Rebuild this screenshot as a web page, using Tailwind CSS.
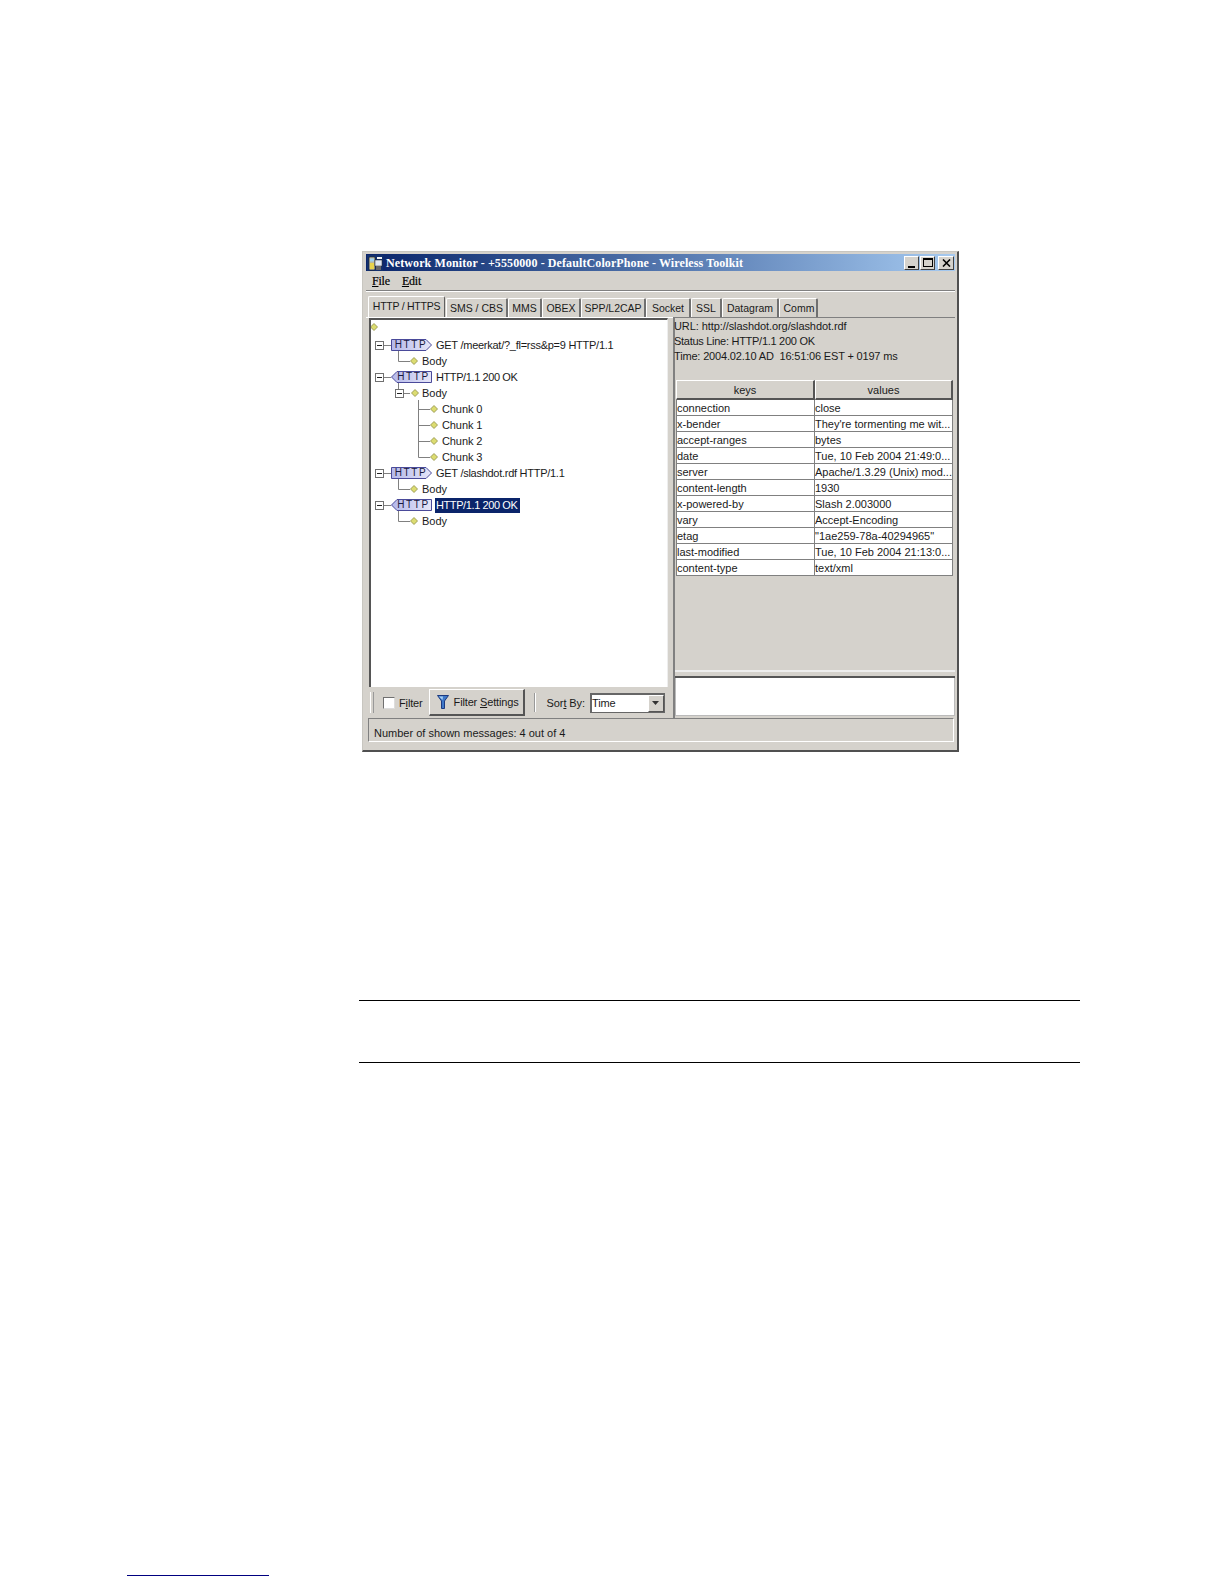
<!DOCTYPE html>
<html>
<head>
<meta charset="utf-8">
<script src="https://cdn.jsdelivr.net/npm/@tailwindcss/browser@4"></script>
</head>
<body class="bg-white">
<div class="w-[1224px] h-[1584px] overflow-hidden font-['Liberation_Sans',Arial,sans-serif] text-[11px] leading-4 text-[#1a1a1a]">
  <div class="pt-[251px] pl-[362px]">
    <!-- window -->
    <div class="w-[597px] h-[501px] box-border bg-[#d5d2cc] border-t border-l border-[#c8c6c0] border-r-2 border-b-2 border-r-[#505050] border-b-[#505050] pt-[2px] pl-[3px] pr-[2px] flex flex-col">
      <!-- title bar -->
      <div class="h-[17px] shrink-0 flex items-center bg-gradient-to-r from-[#0a246a] to-[#a6caf0]">
        <svg class="w-[16px] h-[16px] ml-[1px] shrink-0" viewBox="0 0 16 16">
          <rect width="16" height="16" fill="#12306e"/>
          <rect x="2" y="2" width="6" height="13" rx="1" fill="#b9b9a0" stroke="#222" stroke-width="0.6"/>
          <rect x="3" y="3.5" width="4" height="3" fill="#9fd0ee"/>
          <rect x="3" y="8" width="4" height="6" fill="#e8d44c"/>
          <rect x="8" y="5" width="7" height="6" fill="#dfe8f4" stroke="#222" stroke-width="0.5"/>
          <rect x="9" y="11" width="5" height="4" fill="#666"/>
          <path d="M10 2 L15 2 L15 4 L10 4 Z" fill="#f4f4f4"/>
        </svg>
        <span class="ml-[3px] font-['Liberation_Serif',serif] font-bold text-[12px] tracking-[0.1px] text-white whitespace-nowrap">Network Monitor - +5550000 - DefaultColorPhone - Wireless Toolkit</span>
        <div class="ml-auto flex items-center h-[15px]">
          <div class="w-[15px] h-[14px] bg-[#d5d2cc] border border-t-white border-l-white border-r-[#404040] border-b-[#404040] flex items-end justify-center pb-[1px]"><div class="w-[7px] h-[2px] bg-black"></div></div>
          <div class="ml-[1px] w-[15px] h-[14px] bg-[#d5d2cc] border border-t-white border-l-white border-r-[#404040] border-b-[#404040] flex items-center justify-center"><div class="w-[10px] h-[9px] border border-t-2 border-black"></div></div>
          <div class="ml-[3px] w-[16px] h-[14px] bg-[#d5d2cc] border border-t-white border-l-white border-r-[#404040] border-b-[#404040] flex items-center justify-center">
            <svg class="w-[9px] h-[8px]" viewBox="0 0 9 8"><path d="M1 0.5 L8 7.5 M8 0.5 L1 7.5" stroke="#000" stroke-width="1.6"/></svg>
          </div>
          <div class="w-[1px]"></div>
        </div>
      </div>
      <!-- menu -->
      <div class="h-[19px] shrink-0 flex items-center pl-[6px] font-['Liberation_Serif',serif] text-[12px] tracking-[-0.2px] text-black [-webkit-text-stroke:0.2px_#000]">
        <span><u>F</u>ile</span><span class="ml-[12px]"><u>E</u>dit</span>
      </div>
      <!-- groove -->
      <div class="h-[2px] shrink-0 border-t border-b border-t-[#808080] border-b-white"></div>
      <!-- tabs -->
      <div class="h-[21px] mt-[4px] shrink-0 flex items-end pl-[2px] text-[10.5px]">
        <div class="w-[77px] h-[21px] bg-[#d5d2cc] border-t border-l border-r border-t-white border-l-white border-r-[#606060] rounded-t-[2px] flex items-center justify-center whitespace-nowrap pb-[3px] tracking-[-0.25px]">HTTP / HTTPS</div>
        <div class="ml-[1px] w-[62px] h-[19px] border-t border-l border-r-2 border-t-white border-l-white border-r-[#707070] rounded-t-[2px] flex items-center justify-center whitespace-nowrap">SMS / CBS</div>
        <div class="w-[34px] h-[19px] border-t border-l border-r-2 border-t-white border-l-white border-r-[#707070] rounded-t-[2px] flex items-center justify-center whitespace-nowrap">MMS</div>
        <div class="w-[39px] h-[19px] border-t border-l border-r-2 border-t-white border-l-white border-r-[#707070] rounded-t-[2px] flex items-center justify-center whitespace-nowrap">OBEX</div>
        <div class="w-[65px] h-[19px] border-t border-l border-r-2 border-t-white border-l-white border-r-[#707070] rounded-t-[2px] flex items-center justify-center whitespace-nowrap">SPP/L2CAP</div>
        <div class="w-[45px] h-[19px] border-t border-l border-r-2 border-t-white border-l-white border-r-[#707070] rounded-t-[2px] flex items-center justify-center whitespace-nowrap">Socket</div>
        <div class="w-[31px] h-[19px] border-t border-l border-r-2 border-t-white border-l-white border-r-[#707070] rounded-t-[2px] flex items-center justify-center whitespace-nowrap">SSL</div>
        <div class="w-[57px] h-[19px] border-t border-l border-r-2 border-t-white border-l-white border-r-[#707070] rounded-t-[2px] flex items-center justify-center whitespace-nowrap">Datagram</div>
        <div class="w-[39px] h-[19px] border-t border-l border-r-2 border-t-white border-l-white border-r-[#707070] rounded-t-[2px] flex items-center justify-center whitespace-nowrap pl-[2px]">Comm</div>
      </div>
      <!-- main -->
      <div class="h-[401px] shrink-0 flex">
        <!-- left column -->
        <div class="w-[307px] shrink-0 flex flex-col pl-[3px] border-t border-t-white">
          <div class="relative h-[369px] shrink-0 mr-[5px] bg-white border-t-2 border-l-2 border-[#555] border-r border-r-[#eeeeee] box-border">
            <svg class="absolute left-0 top-0" width="297" height="367" viewBox="371 320 297 367">
              <g stroke="#808080" fill="none" stroke-width="1">
                <path d="M383.5 345.5H391M383.5 377.5H391M383.5 473.5H391M383.5 505.5H391"/>
                <path d="M398.5 351V361.5H410M398.5 479V489.5H410M398.5 511V521.5H410"/>
                <path d="M398.5 383V389M403.5 393.5H410"/>
                <path d="M418.5 400V457.5H430M418.5 409.5H430M418.5 425.5H430M418.5 441.5H430"/>
              </g>
              <g fill="#fff" stroke="#707070">
                <rect x="375.5" y="341.5" width="8" height="8"/>
                <rect x="375.5" y="373.5" width="8" height="8"/>
                <rect x="375.5" y="469.5" width="8" height="8"/>
                <rect x="375.5" y="501.5" width="8" height="8"/>
                <rect x="395.5" y="389.5" width="8" height="8"/>
              </g>
              <path d="M377 345.5H382M377 377.5H382M377 473.5H382M377 505.5H382M397 393.5H402" stroke="#222"/>
              <g fill="#dcdc70" stroke="#8c8c44" stroke-width="0.8">
                <polygon points="374,323.5 377.5,327 374,330.5 370.5,327"/>
                <polygon points="414,357.5 417.5,361 414,364.5 410.5,361"/>
                <polygon points="415,389.5 418.5,393 415,396.5 411.5,393"/>
                <polygon points="434,405.5 437.5,409 434,412.5 430.5,409"/>
                <polygon points="434,421.5 437.5,425 434,428.5 430.5,425"/>
                <polygon points="434,437.5 437.5,441 434,444.5 430.5,441"/>
                <polygon points="434,453.5 437.5,457 434,460.5 430.5,457"/>
                <polygon points="414,485.5 417.5,489 414,492.5 410.5,489"/>
                <polygon points="414,517.5 417.5,521 414,524.5 410.5,521"/>
              </g>
            </svg>
            <div class="relative">
              <div class="h-[17px]"></div>
              <!-- row 1 -->
              <div class="h-4 flex items-center pl-[20px]">
                <div class="relative w-[41px] h-[12px] shrink-0">
                  <svg class="absolute inset-0" width="41" height="12" viewBox="0 0 41 12"><defs><linearGradient id="r" x1="0" x2="1"><stop offset="0" stop-color="#b4b8ea"/><stop offset="1" stop-color="#e6e6f8"/></linearGradient></defs><path d="M0.5 0.5H35L40.5 6L35 11.5H0.5Z" fill="url(#r)" stroke="#4a4a9a"/></svg>
                  <span class="absolute inset-0 flex items-center justify-center pr-[1px] text-[10px] tracking-[1.6px] leading-none text-[#1a1a40]">HTTP</span>
                </div>
                <span class="ml-[4px] whitespace-nowrap tracking-[-0.26px]">GET /meerkat/?_fl=rss&amp;p=9 HTTP/1.1</span>
              </div>
              <div class="h-4 flex items-center pl-[51px]">Body</div>
              <!-- row 2 -->
              <div class="h-4 flex items-center pl-[20px]">
                <div class="relative w-[41px] h-[12px] shrink-0">
                  <svg class="absolute inset-0" width="41" height="12" viewBox="0 0 41 12"><path d="M40.5 0.5H6L0.5 6L6 11.5H40.5Z" fill="url(#r)" stroke="#4a4a9a"/></svg>
                  <span class="absolute inset-0 flex items-center justify-center pl-[4px] text-[10px] tracking-[1.6px] leading-none text-[#1a1a40]">HTTP</span>
                </div>
                <span class="ml-[4px] whitespace-nowrap tracking-[-0.4px]">HTTP/1.1 200 OK</span>
              </div>
              <div class="h-4 flex items-center pl-[51px]">Body</div>
              <div class="h-4 flex items-center pl-[71px] tracking-[-0.1px]">Chunk 0</div>
              <div class="h-4 flex items-center pl-[71px] tracking-[-0.1px]">Chunk 1</div>
              <div class="h-4 flex items-center pl-[71px] tracking-[-0.1px]">Chunk 2</div>
              <div class="h-4 flex items-center pl-[71px] tracking-[-0.1px]">Chunk 3</div>
              <!-- row 3 -->
              <div class="h-4 flex items-center pl-[20px]">
                <div class="relative w-[41px] h-[12px] shrink-0">
                  <svg class="absolute inset-0" width="41" height="12" viewBox="0 0 41 12"><path d="M0.5 0.5H35L40.5 6L35 11.5H0.5Z" fill="url(#r)" stroke="#4a4a9a"/></svg>
                  <span class="absolute inset-0 flex items-center justify-center pr-[1px] text-[10px] tracking-[1.6px] leading-none text-[#1a1a40]">HTTP</span>
                </div>
                <span class="ml-[4px] whitespace-nowrap tracking-[-0.27px]">GET /slashdot.rdf HTTP/1.1</span>
              </div>
              <div class="h-4 flex items-center pl-[51px]">Body</div>
              <!-- row 4 -->
              <div class="h-4 flex items-center pl-[20px]">
                <div class="relative w-[41px] h-[12px] shrink-0">
                  <svg class="absolute inset-0" width="41" height="12" viewBox="0 0 41 12"><path d="M40.5 0.5H6L0.5 6L6 11.5H40.5Z" fill="url(#r)" stroke="#4a4a9a"/></svg>
                  <span class="absolute inset-0 flex items-center justify-center pl-[4px] text-[10px] tracking-[1.6px] leading-none text-[#1a1a40]">HTTP</span>
                </div>
                <span class="ml-[3px] px-[1px] w-[85px] h-[15px] flex items-center whitespace-nowrap bg-[#0a246a] text-white tracking-[-0.4px]">HTTP/1.1 200 OK</span>
              </div>
              <div class="h-4 flex items-center pl-[51px]">Body</div>
            </div>
          </div>
          <!-- toolbar -->
          <div class="h-[31px] shrink-0 flex items-center">
            <div class="ml-[1px] w-[2px] h-[21px] bg-[#d5d2cc] border-l border-l-white border-r border-r-[#999] box-content"></div>
            <div class="ml-[9px] w-[12px] h-[12px] bg-white border border-t-[#707070] border-l-[#707070] border-r-[#ddd] border-b-[#ddd] shrink-0"></div>
            <span class="ml-[4px] tracking-[-0.15px]">F<u>i</u>lter</span>
            <div class="ml-[6px] w-[96px] h-[27px] shrink-0 flex items-center border border-t-white border-l-white border-r-2 border-b-2 border-r-[#555] border-b-[#555] box-border">
              <svg class="ml-[7px] w-[12px] h-[14px] shrink-0" viewBox="0 0 12 14"><path d="M0.5 0.5H11.5L7.5 6V13.5H4.5V6Z" fill="#3f78c8" stroke="#1c3a80"/><path d="M2 1.5H6L5.5 5Z" fill="#a8d0f4"/></svg>
              <span class="ml-[5px] whitespace-nowrap tracking-[-0.15px]">Filter <u>S</u>ettings</span>
            </div>
            <div class="ml-[9px] w-[1px] h-[19px] bg-[#999] border-r border-r-white box-content"></div>
            <span class="ml-[11px] whitespace-nowrap tracking-[-0.1px]">Sor<u>t</u> By:</span>
            <div class="ml-[5px] w-[75px] h-[20px] shrink-0 flex items-center bg-white border-t-2 border-l-2 border-[#666] border-r border-b border-r-[#666] border-b-[#666] box-border">
              <span class="pl-[0px] tracking-[-0.1px]">Time</span>
              <div class="ml-auto w-[16px] h-full bg-[#d5d2cc] border border-t-white border-l-white border-r-[#555] border-b-[#555] flex items-center justify-center">
                <svg class="w-[7px] h-[4px]" viewBox="0 0 7 4"><path d="M0 0H7L3.5 4Z" fill="#333"/></svg>
              </div>
            </div>
          </div>
        </div>
        <!-- right column -->
        <div class="w-[282px] shrink-0 flex flex-col border-l-2 border-l-[#808080] border-t border-t-[#808080] box-border">
          <div class="h-[352px] shrink-0 pt-[1px]">
            <div class="h-[15px] whitespace-nowrap leading-[15px] -ml-[1px] tracking-[-0.08px]">URL: http://slashdot.org/slashdot.rdf</div>
            <div class="h-[15px] whitespace-nowrap leading-[15px] -ml-[1px] tracking-[-0.28px]">Status Line: HTTP/1.1 200 OK</div>
            <div class="h-[15px] whitespace-nowrap leading-[15px] -ml-[1px] tracking-[-0.17px]">Time: 2004.02.10 AD&nbsp; 16:51:06 EST + 0197 ms</div>
            <div class="mt-[16px] ml-[1px] w-[277px]">
              <div class="h-[20px] flex">
                <div class="w-[139px] border-t border-l border-r-2 border-b-2 border-t-white border-l-white border-r-[#555] border-b-[#555] flex items-center justify-center">keys</div>
                <div class="flex-1 border-t border-l border-r-2 border-b-2 border-t-white border-l-white border-r-[#555] border-b-[#555] flex items-center justify-center">values</div>
              </div>
              <div class="bg-white border-l border-r border-[#808080]">
                <div class="h-4 flex border-b border-[#808080]"><div class="w-[138px] border-r border-[#808080] leading-4">connection</div><div class="whitespace-nowrap">close</div></div>
                <div class="h-4 flex border-b border-[#808080]"><div class="w-[138px] border-r border-[#808080] leading-4">x-bender</div><div class="whitespace-nowrap">They're tormenting me wit...</div></div>
                <div class="h-4 flex border-b border-[#808080]"><div class="w-[138px] border-r border-[#808080] leading-4">accept-ranges</div><div class="whitespace-nowrap">bytes</div></div>
                <div class="h-4 flex border-b border-[#808080]"><div class="w-[138px] border-r border-[#808080] leading-4">date</div><div class="whitespace-nowrap">Tue, 10 Feb 2004 21:49:0...</div></div>
                <div class="h-4 flex border-b border-[#808080]"><div class="w-[138px] border-r border-[#808080] leading-4">server</div><div class="whitespace-nowrap">Apache/1.3.29 (Unix) mod...</div></div>
                <div class="h-4 flex border-b border-[#808080]"><div class="w-[138px] border-r border-[#808080] leading-4">content-length</div><div class="whitespace-nowrap">1930</div></div>
                <div class="h-4 flex border-b border-[#808080]"><div class="w-[138px] border-r border-[#808080] leading-4">x-powered-by</div><div class="whitespace-nowrap">Slash 2.003000</div></div>
                <div class="h-4 flex border-b border-[#808080]"><div class="w-[138px] border-r border-[#808080] leading-4">vary</div><div class="whitespace-nowrap">Accept-Encoding</div></div>
                <div class="h-4 flex border-b border-[#808080]"><div class="w-[138px] border-r border-[#808080] leading-4">etag</div><div class="whitespace-nowrap">"1ae259-78a-40294965"</div></div>
                <div class="h-4 flex border-b border-[#808080]"><div class="w-[138px] border-r border-[#808080] leading-4">last-modified</div><div class="whitespace-nowrap">Tue, 10 Feb 2004 21:13:0...</div></div>
                <div class="h-4 flex border-b border-[#808080]"><div class="w-[138px] border-r border-[#808080] leading-4">content-type</div><div class="whitespace-nowrap">text/xml</div></div>
              </div>
            </div>
          </div>
          <!-- divider -->
          <div class="h-[8px] shrink-0 border-t-2 border-t-[#eeeeee] border-b-2 border-b-[#555]"></div>
          <div class="h-[38px] shrink-0 bg-white border-l border-b border-r border-[#bbb]"></div>
        </div>
      </div>
      <!-- status bar -->
      <div class="h-[24px] shrink-0 ml-[2px] mr-[1px] border-t border-t-[#808080] border-l border-l-[#808080] border-r border-r-white border-b border-b-white pt-[6px] pl-[5px] whitespace-nowrap">Number of shown messages: 4 out of 4</div>
    </div>
  </div>
  <div class="mt-[248px] ml-[359px] w-[721px] h-[1px] bg-black"></div>
  <div class="mt-[61px] ml-[359px] w-[721px] h-[1px] bg-black"></div>
  <div class="mt-[512px] ml-[127px] w-[142px] h-[1px] bg-[#000080]"></div>
</div>
</body>
</html>
